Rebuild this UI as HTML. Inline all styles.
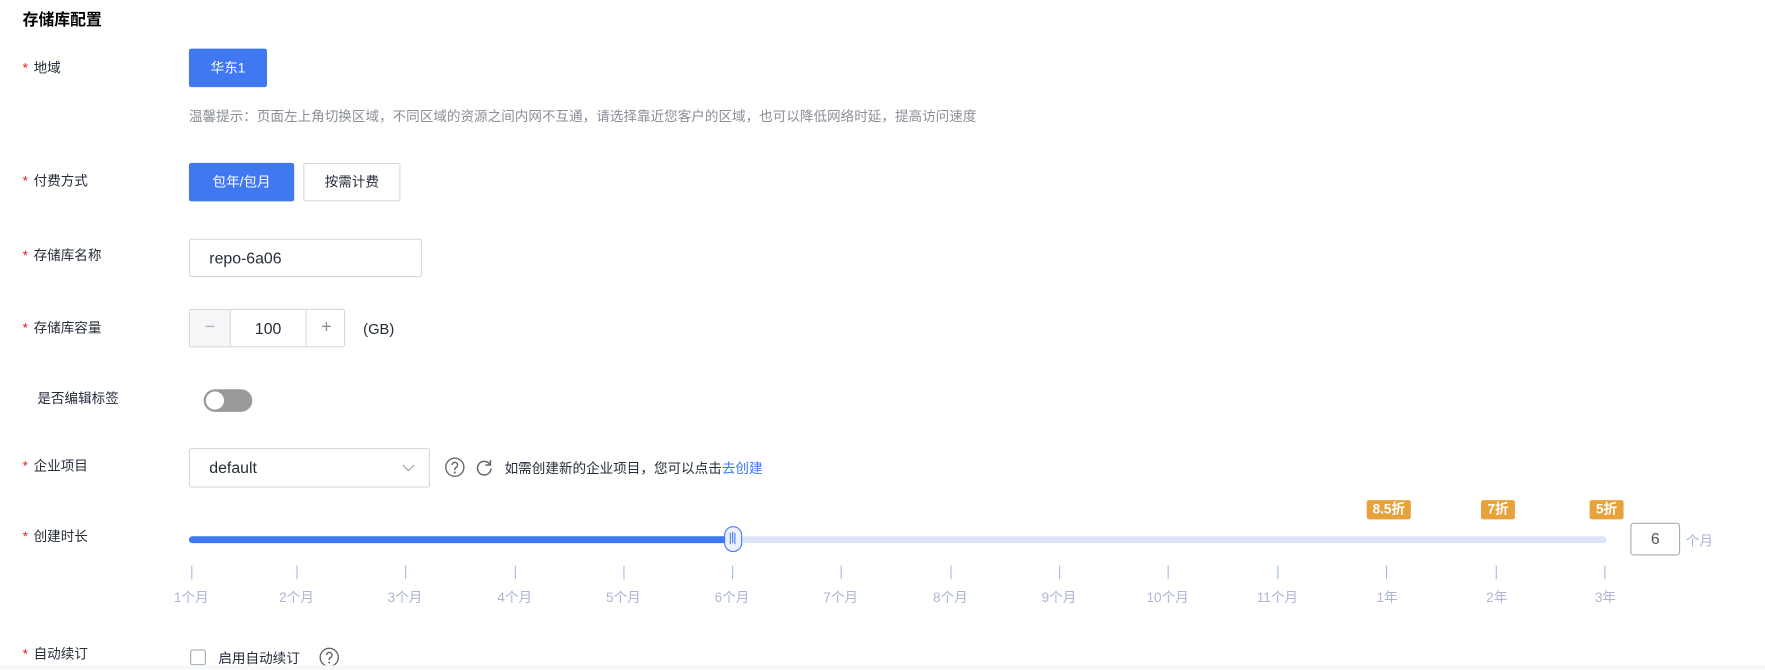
<!DOCTYPE html>
<html><head><meta charset="utf-8"><style>
html,body{margin:0;padding:0;background:#fff;width:1765px;height:669px;overflow:hidden}
#w{position:absolute;left:0;top:0;width:1560px;height:592px;transform:scale(1.1314);transform-origin:0 0;font-family:"Liberation Sans","Noto Sans CJK SC",sans-serif;color:#252b3a;font-size:12px}
.a{position:absolute;white-space:nowrap}
.lab{position:absolute;left:20px;font-size:12px;line-height:14px;color:#252b3a}
.lab b{color:#e5242b;font-weight:normal;margin-right:5px}
.btn{position:absolute;box-sizing:border-box;border-radius:2px;text-align:center;font-size:12px}
.tick{position:absolute;top:500px;width:1px;height:12px;background:#a9bde3}
.tl{position:absolute;top:519px;font-size:12px;color:#aab6d3;transform:translateX(-50%);white-space:nowrap}
.bd{position:absolute;top:442px;height:17px;line-height:17px;background:#e8a23c;color:#fff;font-weight:bold;font-size:12px;border-radius:2px;text-align:center}
</style></head><body><div id="w">
<div class="a" style="left:20px;top:7px;font-size:14px;font-weight:bold;color:#000">存储库配置</div>

<div class="lab" style="top:53px"><b>*</b>地域</div>
<div class="btn" style="left:167px;top:43px;width:69px;height:34px;line-height:34px;background:#4078f2;color:#fff">华东1</div>
<div class="a" style="left:167px;top:94px;color:#8a8e99;font-size:12px">温馨提示：页面左上角切换区域，不同区域的资源之间内网不互通，请选择靠近您客户的区域，也可以降低网络时延，提高访问速度</div>

<div class="lab" style="top:153px"><b>*</b>付费方式</div>
<div class="btn" style="left:167px;top:144px;width:93px;height:34px;line-height:34px;background:#4078f2;color:#fff">包年/包月</div>
<div class="btn" style="left:268px;top:144px;width:86px;height:34px;line-height:32px;border:1px solid #d7d9de;background:#fff;color:#252b3a">按需计费</div>

<div class="lab" style="top:219px"><b>*</b>存储库名称</div>
<div class="btn" style="left:167px;top:211px;width:206px;height:34px;line-height:32px;border:1px solid #d7d9de;text-align:left;padding-left:17px;font-size:14px">repo-6a06</div>

<div class="lab" style="top:283px"><b>*</b>存储库容量</div>
<div class="btn" style="left:167px;top:273px;width:138px;height:34px;border:1px solid #d7d9de;overflow:hidden">
 <div class="a" style="left:0;top:0;width:35px;height:32px;background:#f5f6f8;border-right:1px solid #d7d9de;line-height:32px;color:#b0b4bc;font-size:16px">−</div>
 <div class="a" style="left:36px;top:0;width:66px;height:32px;line-height:32px;font-size:14px;text-align:center">100</div>
 <div class="a" style="left:102px;top:0;width:35px;height:32px;border-left:1px solid #d7d9de;line-height:32px;color:#8a8e99;font-size:16px">+</div>
</div>
<div class="a" style="left:321px;top:283px;font-size:13px">(GB)</div>

<div class="lab" style="top:345px;left:33px">是否编辑标签</div>
<div class="a" style="left:180px;top:344px;width:43px;height:20px;border-radius:10px;background:#9a9a9a"></div>
<div class="a" style="left:182px;top:346px;width:16px;height:16px;border-radius:8px;background:#fff"></div>

<div class="lab" style="top:405px"><b>*</b>企业项目</div>
<div class="btn" style="left:167px;top:396px;width:213px;height:35px;line-height:33px;border:1px solid #d7d9de;text-align:left;padding-left:17px;font-size:14px">default
 <svg class="a" style="left:187px;top:11px" width="12" height="10" viewBox="0 0 12 10"><path d="M1 3l5 5 5-5" fill="none" stroke="#9aa0ab" stroke-width="1"/></svg></div>
<svg class="a" style="left:393px;top:404px" width="18" height="18" viewBox="0 0 18 18"><circle cx="9" cy="9" r="8" fill="none" stroke="#666" stroke-width="1.2"/><path d="M6.6 7a2.4 2.4 0 1 1 3.4 2.2c-.7.4-1 .8-1 1.6v.6" fill="none" stroke="#666" stroke-width="1.3"/><circle cx="9" cy="13.6" r=".9" fill="#666"/></svg>
<svg class="a" style="left:420px;top:405px" width="16" height="16" viewBox="0 0 16 16"><path d="M13 5.5A6 6 0 1 0 14 9" fill="none" stroke="#666" stroke-width="1.3"/><path d="M13.5 1.5v4.5H9" fill="none" stroke="#666" stroke-width="1.3"/></svg>
<div class="a" style="left:446px;top:405px;font-size:12px">如需创建新的企业项目，您可以点击<span style="color:#3f78f6">去创建</span></div>

<div class="lab" style="top:467px"><b>*</b>创建时长</div>
<div class="bd" style="left:1208px;width:39px">8.5折</div>
<div class="bd" style="left:1309px;width:30px">7折</div>
<div class="bd" style="left:1405px;width:30px">5折</div>
<div class="a" style="left:167px;top:474px;width:1253px;height:6px;border-radius:3px;background:#dde6f8"></div>
<div class="a" style="left:167px;top:474px;width:482px;height:6px;border-radius:3px 0 0 3px;background:#3f78f6"></div>
<div class="a" style="left:640px;top:465px;width:14px;height:21px;border:1.5px solid #4a7ef2;border-radius:8px;background:#edf2fd"></div>
<div class="a" style="left:645px;top:471px;width:1px;height:10px;background:#4a7ef2;box-shadow:2px -1px 0 #4a7ef2,4px 0 0 #4a7ef2"></div>
<div class="tick" style="left:169px"></div><div class="tl" style="left:169px">1个月</div>
<div class="tick" style="left:262px"></div><div class="tl" style="left:262px">2个月</div>
<div class="tick" style="left:358px"></div><div class="tl" style="left:358px">3个月</div>
<div class="tick" style="left:455px"></div><div class="tl" style="left:455px">4个月</div>
<div class="tick" style="left:551px"></div><div class="tl" style="left:551px">5个月</div>
<div class="tick" style="left:647px"></div><div class="tl" style="left:647px">6个月</div>
<div class="tick" style="left:743px"></div><div class="tl" style="left:743px">7个月</div>
<div class="tick" style="left:840px"></div><div class="tl" style="left:840px">8个月</div>
<div class="tick" style="left:936px"></div><div class="tl" style="left:936px">9个月</div>
<div class="tick" style="left:1032px"></div><div class="tl" style="left:1032px">10个月</div>
<div class="tick" style="left:1129px"></div><div class="tl" style="left:1129px">11个月</div>
<div class="tick" style="left:1225px"></div><div class="tl" style="left:1226px">1年</div>
<div class="tick" style="left:1322px"></div><div class="tl" style="left:1323px">2年</div>
<div class="tick" style="left:1418px"></div><div class="tl" style="left:1419px">3年</div>
<div class="btn" style="left:1441px;top:462px;width:44px;height:29px;line-height:27px;border:1px solid #a8acb5;border-radius:3px;font-size:14px;color:#555">6</div>
<div class="a" style="left:1490px;top:469px;color:#aab6d3">个月</div>

<div class="lab" style="top:571px"><b>*</b>自动续订</div>
<div class="a" style="left:168px;top:574px;width:12px;height:12px;border:1px solid #a8acb5;border-radius:2px"></div>
<div class="a" style="left:193px;top:573px">启用自动续订</div>
<svg class="a" style="left:282px;top:572px" width="18" height="18" viewBox="0 0 18 18"><circle cx="9" cy="9" r="8" fill="none" stroke="#666" stroke-width="1.2"/><path d="M6.6 7a2.4 2.4 0 1 1 3.4 2.2c-.7.4-1 .8-1 1.6v.6" fill="none" stroke="#666" stroke-width="1.3"/><circle cx="9" cy="13.6" r=".9" fill="#666"/></svg>
<div class="a" style="left:0;top:588px;width:1560px;height:4px;background:#f7f8fa"></div>
</div></body></html>
